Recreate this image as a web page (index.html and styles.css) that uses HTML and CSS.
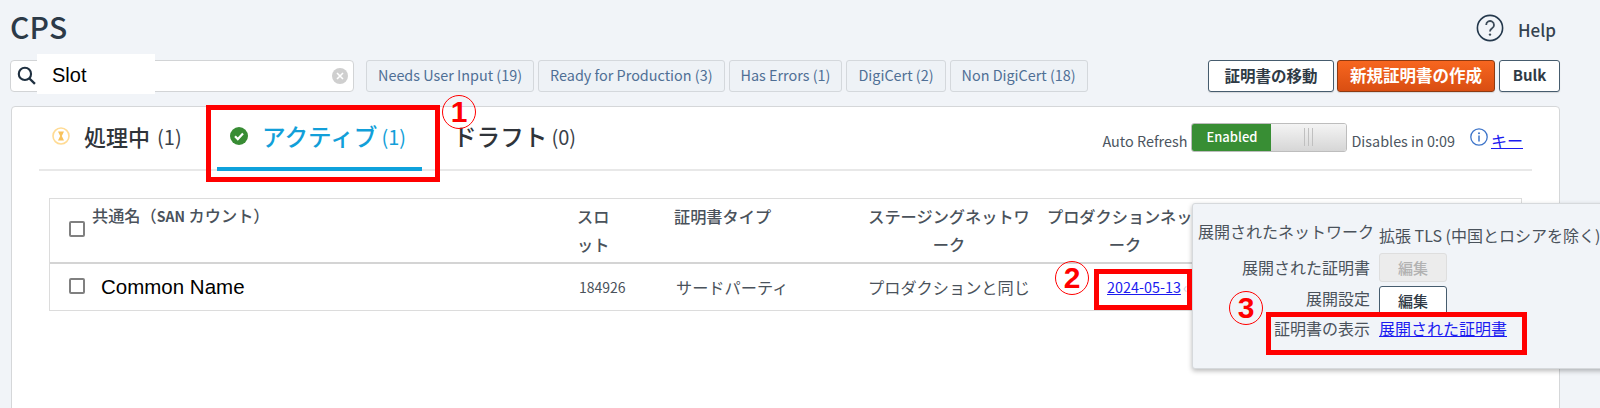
FILE: index.html
```html
<!DOCTYPE html>
<html lang="ja">
<head>
<meta charset="utf-8">
<title>CPS</title>
<link rel="stylesheet" href="styles.css">
</head>
<body>
<div class="page">
  <header class="topbar">
    <h1 class="title">CPS</h1>
    <a class="help">
      <svg class="help-icon" viewBox="0 0 28 28"><circle cx="14" cy="14" r="12.6" fill="none" stroke="#24384c" stroke-width="1.6"/><path d="M10.2 11a3.9 3.9 0 1 1 5.9 3.3c-1.4.9-2.1 1.6-2.1 3.2" fill="none" stroke="#3b4a58" stroke-width="1.8"/><circle cx="14" cy="20.6" r="1.2" fill="#3b4a58"/></svg>
      <span>Help</span>
    </a>
  </header>

  <div class="toolbar">
    <div class="search">
      <svg class="search-icon" viewBox="0 0 18 18"><circle cx="7.5" cy="7.5" r="5.8" fill="none" stroke="#1f3040" stroke-width="2"/><path d="M11.8 11.8 17 17" stroke="#1f3040" stroke-width="2.2"/></svg>
      <svg class="clear-icon" viewBox="0 0 16 16"><circle cx="8" cy="8" r="8" fill="#cfcfcf"/><path d="M5 5l6 6M11 5l-6 6" stroke="#fff" stroke-width="1.6"/></svg>
      <span class="search-patch">Slot</span>
    </div>
    <div class="filters">
      <button class="filter">Needs User Input (19)</button>
      <button class="filter">Ready for Production (3)</button>
      <button class="filter">Has Errors (1)</button>
      <button class="filter">DigiCert (2)</button>
      <button class="filter">Non DigiCert (18)</button>
    </div>
    <div class="actions">
      <button class="btn btn-move">証明書の移動</button>
      <button class="btn btn-primary">新規証明書の作成</button>
      <button class="btn btn-bulk">Bulk</button>
    </div>
  </div>

  <section class="card">
    <div class="tabs">
      <div class="tab tab-first">
        <svg class="tab-icon" viewBox="0 0 18 18"><circle cx="9" cy="9" r="8" fill="#fff" stroke="#ffdb94" stroke-width="1.6"/><path d="M6 4.5h6L9.8 9 12 13.5H6L8.2 9z" fill="#f8c25c"/></svg>
        <span class="tab-label">処理中</span><span class="tab-count">(1)</span>
      </div>
      <div class="tab tab-active">
        <svg class="tab-icon" viewBox="0 0 18 18"><circle cx="9" cy="9" r="9" fill="#388c34"/><path d="M5 9.3l2.8 2.8L13 6.6" fill="none" stroke="#fff" stroke-width="2.2"/></svg>
        <span class="tab-label">アクティブ</span><span class="tab-count">(1)</span>
      </div>
      <div class="tab tab-draft">
        <span class="tab-label">ドラフト</span><span class="tab-count">(0)</span>
      </div>
      <div class="refresh">
        <span class="refresh-label">Auto Refresh</span>
        <div class="toggle">
          <span class="toggle-on">Enabled</span>
          <span class="toggle-knob"><i></i></span>
        </div>
        <span class="refresh-time">Disables in 0:09</span>
        <svg class="info-icon" viewBox="0 0 18 18"><circle cx="9" cy="9" r="8.2" fill="none" stroke="#3d74c9" stroke-width="1.3"/><circle cx="9" cy="5.2" r="1" fill="#3d74c9"/><path d="M9 7.6v5.8" stroke="#3d74c9" stroke-width="1.5"/></svg>
        <a class="key-link">キー</a>
      </div>
    </div>

    <div class="table">
      <div class="row row-head">
        <div class="cell cell-name"><span class="checkbox checkbox-head"></span><span>共通名（<b class="san">SAN</b> カウント）</span></div>
        <div class="cell">スロ<br>ット</div>
        <div class="cell">証明書タイプ</div>
        <div class="cell cell-center">ステージングネットワ<br>ーク</div>
        <div class="cell cell-center cell-prod">プロダクションネットワ<br>ーク</div>
      </div>
      <div class="row row-body">
        <div class="cell cell-name"><span class="checkbox"></span><span class="common-name">Common Name</span></div>
        <div class="cell cell-slot">184926</div>
        <div class="cell cell-type">サードパーティ</div>
        <div class="cell cell-center cell-same">プロダクションと同じ</div>
        <div class="cell cell-date"><a class="date-link">2024-05-13</a><span class="chev">‹</span></div>
      </div>
    </div>
  </section>

  <aside class="popover">
    <div class="pop-label">展開されたネットワーク</div>
    <div class="pop-value">拡張 TLS (中国とロシアを除く)</div>
    <div class="pop-label pop-inset">展開された証明書</div>
    <div><button class="pop-btn pop-btn-off">編集</button></div>
    <div class="pop-label pop-inset pop-up">展開設定</div>
    <div><button class="pop-btn">編集</button></div>
    <div class="pop-label pop-inset pop-last">証明書の表示</div>
    <div class="pop-last pop-link-cell"><a class="pop-link">展開された証明書</a></div>
  </aside>

  <div class="mark mark-tab"></div>
  <div class="mark mark-date"></div>
  <div class="mark mark-view"></div>
  <span class="num num-1">1</span>
  <span class="num num-2">2</span>
  <span class="num num-3">3</span>
</div>
</body>
</html>
```

FILE: styles.css
```css
* { box-sizing: border-box; }
html, body { margin: 0; padding: 0; height: 408px; overflow: hidden; }
body {
  background: #f1f4f8;
  color: #3a4149;
  font-family: "Noto Sans CJK JP", "Noto Sans", sans-serif;
  font-size: 16px;
}
button { font-family: inherit; cursor: pointer; }
a { cursor: pointer; }

.page { position: relative; width: 1600px; height: 408px; overflow: hidden; padding: 0 40px 0 10px; }

.topbar { display: flex; justify-content: space-between; height: 60px; }
.title { margin: 6px 0 0; font-size: 30px; line-height: 40px; font-weight: 500; color: #2c3a48; letter-spacing: .2px; }
.help { display: flex; align-items: center; gap: 14px; height: 28px; margin-top: 14px; margin-right: 4px; color: #35424f; font-size: 17px; font-weight: 500; }
.help span { position: relative; top: 1px; }
.help-icon { width: 28px; height: 28px; }

.toolbar { display: flex; align-items: flex-start; height: 46px; }
.search { position: relative; width: 344px; height: 32px; background: #fff; border: 1px solid #d2d4d6; border-radius: 4px; }
.search-icon { position: absolute; left: 6px; top: 5px; width: 19px; height: 19px; }
.clear-icon { position: absolute; right: 5px; top: 7px; width: 16px; height: 16px; }
.search-patch { position: absolute; left: 26px; top: -7px; width: 118px; height: 40px; background: #fff; padding-left: 15px; font: 20px/43px "Liberation Sans", sans-serif; color: #000; }

.filters { display: flex; gap: 4px; margin-left: 12px; }
.filter { height: 32px; padding: 0 11px 3px; background: #eef2f6; border: 1px solid #d4d8dc; border-radius: 3px; color: #4f6f95; font-size: 14.4px; white-space: nowrap; }

.actions { display: flex; gap: 3px; margin-left: auto; }
.btn { height: 32px; border-radius: 3px; border: 1px solid #465c6e; background: #fff; color: #2f3a45; font-size: 15.5px; font-weight: 700; padding: 0 0 3px; box-shadow: 0 1px 1px rgba(0,0,0,.12); }
.btn-move { width: 126px; }
.btn-primary { width: 158px; font-size: 16.5px; background: linear-gradient(#f7661f, #d94e12); border-color: #8d3a12; color: #fff; }
.btn-bulk { width: 61px; margin-left: 1px; font-weight: 600; font-size: 15px; }

.card { width: 1549px; height: 400px; margin-left: 1px; background: #fff; border: 1px solid #d5d7d9; border-radius: 4px 4px 0 0; padding: 0 27px; }

.tabs { display: flex; align-items: stretch; height: 64px; padding-right: 9px; border-bottom: 2px solid #e8e8e8; }
.tab { display: flex; align-items: center; height: 64px; padding-bottom: 6px; white-space: nowrap; }
.tab-icon { width: 18px; height: 18px; margin-right: 14px; flex: none; }
.tab-label { font-size: 22px; font-weight: 500; color: #2f343a; }
.tab-count { font-size: 20px; margin-left: 7px; color: #3a4149; }
.tab-first { padding-left: 13px; width: 178px; }
.tab-active { width: 205px; padding-left: 13px; border-bottom: 4px solid #0ea2dc; padding-bottom: 2px; }
.tab-active .tab-label, .tab-active .tab-count { color: #129fd9; }
.tab-active .tab-label, .tab-draft .tab-label { font-size: 23.6px; }
.tab-active .tab-count, .tab-draft .tab-count { margin-left: 4px; }
.tab-draft { margin-left: 31px; }

.refresh { display: flex; align-items: center; margin-left: auto; height: 60px; font-size: 14.4px; color: #4b5560; white-space: nowrap; }
.refresh-label, .refresh-time, .key-link { position: relative; top: 3px; }
.refresh-label { margin-right: 4px; }
.toggle { display: flex; width: 156px; height: 29px; border: 1px solid #bdbdbd; border-radius: 3px; overflow: hidden; margin-right: 4px; }
.toggle-on { width: 79px; background: #388e34; color: #fff; font-size: 13px; font-weight: 500; text-align: center; line-height: 26px; }
.toggle-knob { flex: 1; background: linear-gradient(#f4f4f4, #d6d6d6); display: flex; align-items: center; justify-content: center; }
.toggle-knob i { width: 9px; height: 18px; border-left: 1px solid #c0c0c0; border-right: 1px solid #c0c0c0; background: linear-gradient(90deg, transparent 3px, #c0c0c0 3px, #c0c0c0 4px, transparent 4px); }
.info-icon { width: 18px; height: 18px; margin-left: 15px; margin-right: 3px; flex: none; }
.key-link { color: #1b1bf0; text-decoration: underline; font-size: 16px; }

.table { width: 1473px; margin: 27px 0 0 10px; border: 1px solid #dcdcdc; }
.row { display: grid; grid-template-columns: 519px 97px 195px 176px 176px 1fr; }
.row-head { height: 65px; border-bottom: 2px solid #d4d4d4; }
.row-body { height: 46px; align-items: center; }
.cell { padding: 3px 8px 0; line-height: 28px; font-size: 16.2px; color: #4a525b; }
.cell-center { text-align: center; padding-left: 0; padding-right: 0; white-space: nowrap; }
.cell-prod { text-indent: 10px; }
.row-head .cell { font-weight: 500; }
.cell-name { display: flex; padding-left: 19px; }
.row-head .cell-name { padding-top: 2px; }
.san { font-size: 14px; font-weight: 700; }
.checkbox { width: 16px; height: 16px; border: 2px solid #808080; border-radius: 2px; flex: none; background: #fff; }
.checkbox-head { margin-top: 20px; margin-right: 7px; }
.row-body .checkbox { margin: 6px 16px 0 0; }
.row-body .cell { padding-top: 0; }
.common-name { font: 20.5px/30px "Liberation Sans", sans-serif; color: #000; }
.cell-slot { font-size: 14px; padding-left: 10px; }
.cell-type { padding-left: 10px; }
.cell-date { display: flex; padding-left: 70px; white-space: nowrap; font-size: 14.4px; }
.date-link { color: #1b1bf0; text-decoration: underline; }
.chev { color: #c9d3df; margin-left: 2px; }

.popover { position: absolute; left: 1192px; top: 203px; width: 430px; height: 166px; padding: 15px 0 0 5px; background: #f1f4f8; border: 1px solid #d6d9dc; border-radius: 3px; box-shadow: 0 2px 5px rgba(0,0,0,.28); display: grid; grid-template-columns: 176px 1fr; grid-template-rows: 34px 33px 33px 28px; column-gap: 5px; align-content: start; font-size: 16px; color: #4a525b; }
.pop-label { white-space: nowrap; line-height: 24px; }
.pop-inset:not(.pop-up):not(.pop-last) { line-height: 28px; }
.pop-up { line-height: 24px; }
.pop-value { white-space: nowrap; line-height: 32px; }
.pop-inset { text-align: right; padding-right: 4px; }
.pop-btn { width: 68px; height: 29px; padding: 0; background: #fff; border: 1px solid #465c6e; border-radius: 3px; font-size: 15px; font-weight: 500; color: #2f3a45; }
.pop-btn-off { background: #ececec; border-color: #dedede; color: #b2b2b2; }
.pop-last { line-height: 18px; }
.pop-link-cell { line-height: 18px; }
.pop-link { color: #1b1bf0; text-decoration: underline; }

.mark { position: absolute; border: 5px solid #f00; }
.mark-tab { left: 206px; top: 105px; width: 234px; height: 77px; }
.mark-date { left: 1094px; top: 269px; width: 98px; height: 41px; }
.mark-view { left: 1266px; top: 312px; width: 261px; height: 43px; }

.num { position: absolute; width: 34px; height: 34px; border: 1px solid #f00; border-radius: 50%; color: #f00; font: 700 30px/32px "Liberation Sans", sans-serif; text-align: center; }
.num-1 { left: 442px; top: 95px; }
.num-2 { left: 1055px; top: 261px; }
.num-3 { left: 1229px; top: 291px; }
```
